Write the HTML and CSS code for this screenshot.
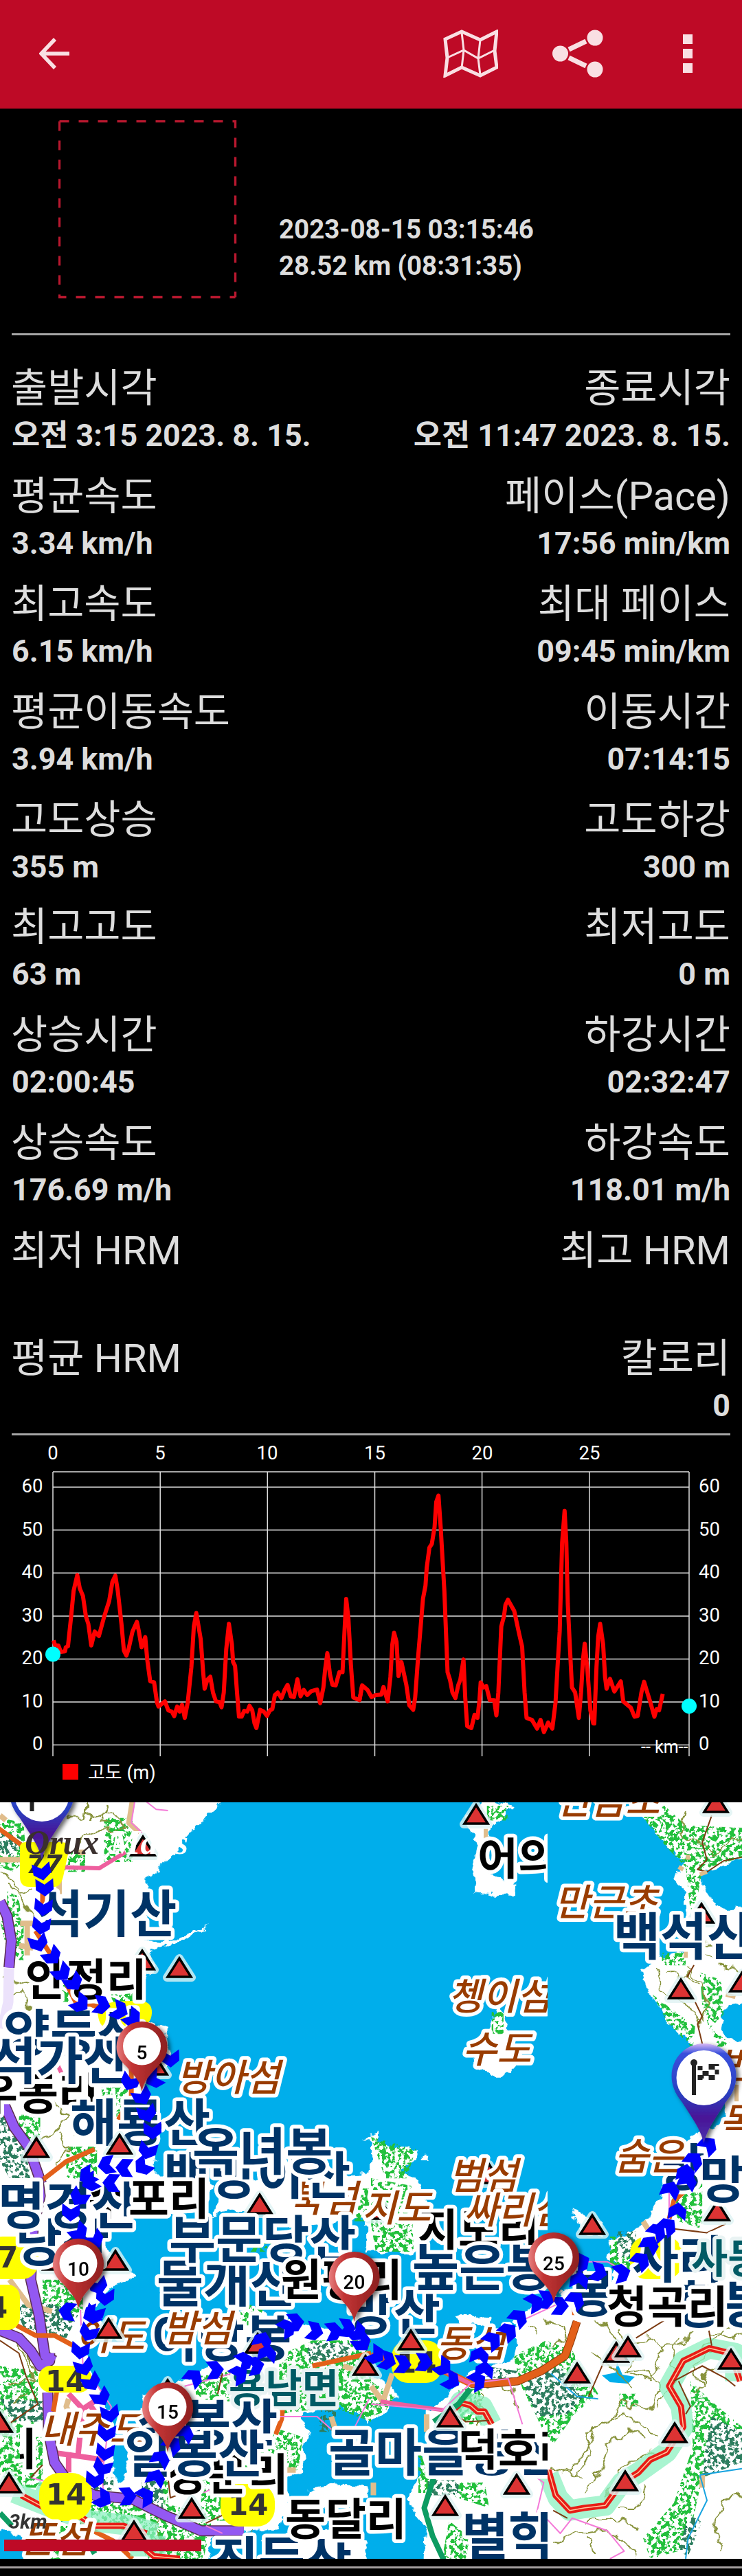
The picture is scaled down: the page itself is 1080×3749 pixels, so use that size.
FILE: index.html
```
<!DOCTYPE html>
<html lang="ko">
<head>
<meta charset="UTF-8" />
<meta name="viewport" content="width=device-width, initial-scale=1" />
<title>Track 2023-08-15</title>

<link rel="stylesheet" href="styles.css">
</head>
<body>

<!-- TOP BAR -->
<header class="topbar">
    <svg class="icon-back" viewBox="0 0 46 46"><path d="M44 23H5M23 2L3 23l20 21" /></svg>
    <div class="actions">
        <svg class="icon-map" viewBox="0 0 80 70">
            <path class="thick" d="M3 14L27 3l27 12L78 3l-3 28 3 24-24 12-27-12L3 67l3-26z" />
            <path class="thin" d="M27 4l3 26-3 26M54 15l-3 27 3 24M6 41l24-11 21 12 24-12" />
        </svg>
        <svg class="icon-share" viewBox="0 0 74 70">
            <circle cx="11.500" cy="35" r="11.500" /><circle cx="62" cy="12" r="11.500" /><circle cx="62" cy="58" r="11.500" />
            <path d="M24 29l25-12M24 41l25 12" />
        </svg>
        <svg class="icon-more" viewBox="0 0 14 56"><path d="M0 0h14v14H0zM0 21h14v14H0zM0 42h14v14H0z" /></svg>
    </div>
</header>

<!-- TRACK SUMMARY -->
<section class="summary">
    <svg class="photo" viewBox="0 0 260 260"><path d="M1.500 1.500h256v256M1.500 1.500v256h256" /></svg>
    <div class="summary-text">
        <p>2023-08-15 03:15:46</p>
        <p>28.52 km (08:31:35)</p>
    </div>
</section>

<!-- STATS -->
<section class="stats">
    <div class="stat"><h2>출발시각</h2><p>오전 3:15 2023. 8. 15.</p></div>
    <div class="stat"><h2>종료시각</h2><p>오전 11:47 2023. 8. 15.</p></div>
    <div class="stat"><h2>평균속도</h2><p>3.34 km/h</p></div>
    <div class="stat"><h2>페이스(Pace)</h2><p>17:56 min/km</p></div>
    <div class="stat"><h2>최고속도</h2><p>6.15 km/h</p></div>
    <div class="stat"><h2>최대 페이스</h2><p>09:45 min/km</p></div>
    <div class="stat"><h2>평균이동속도</h2><p>3.94 km/h</p></div>
    <div class="stat"><h2>이동시간</h2><p>07:14:15</p></div>
    <div class="stat"><h2>고도상승</h2><p>355 m</p></div>
    <div class="stat"><h2>고도하강</h2><p>300 m</p></div>
    <div class="stat"><h2>최고고도</h2><p>63 m</p></div>
    <div class="stat"><h2>최저고도</h2><p>0 m</p></div>
    <div class="stat"><h2>상승시간</h2><p>02:00:45</p></div>
    <div class="stat"><h2>하강시간</h2><p>02:32:47</p></div>
    <div class="stat"><h2>상승속도</h2><p>176.69 m/h</p></div>
    <div class="stat"><h2>하강속도</h2><p>118.01 m/h</p></div>
    <div class="stat"><h2>최저 HRM</h2><p></p></div>
    <div class="stat"><h2>최고 HRM</h2><p></p></div>
    <div class="stat"><h2>평균 HRM</h2><p></p></div>
    <div class="stat"><h2>칼로리</h2><p>0</p></div>
</section>

<!-- ELEVATION CHART -->
<svg class="chart" viewBox="0 2089 1080 534">
    <path class="grid" d="M77 2142H1003M77 2164.300H1003M77 2226.800H1003M77 2289.300H1003M77 2351.900H1003M77 2414.400H1003M77 2476.900H1003M77 2539.400H1003M77 2142V2556M233.200 2142V2556M389.300 2142V2556M545.500 2142V2556M701.600 2142V2556M857.800 2142V2556M1003 2142V2556" />
    <g class="middle">
        <text x="77" y="2124">0</text><text x="233" y="2124">5</text><text x="389" y="2124">10</text>
        <text x="545.500" y="2124">15</text><text x="702" y="2124">20</text><text x="858" y="2124">25</text>
    </g>
    <g class="right">
        <text x="62.500" y="2171.500">60</text><text x="62.500" y="2234.500">50</text><text x="62.500" y="2296.500">40</text>
        <text x="62.500" y="2359.500">30</text><text x="62.500" y="2421.500">20</text><text x="62.500" y="2484.500">10</text><text x="62.500" y="2546.500">0</text>
    </g>
    <g>
        <text x="1017" y="2171.500">60</text><text x="1017" y="2234.500">50</text><text x="1017" y="2296.500">40</text>
        <text x="1017" y="2359.500">30</text><text x="1017" y="2421.500">20</text><text x="1017" y="2484.500">10</text><text x="1017" y="2546.500">0</text>
    </g>
    <text class="unit" x="933" y="2550.500">-- km--</text>
    <g class="profile">
        <path transform="translate(0 2060) scale(.35714 .36991)" d="M218 885L225 905 238 905 248 930 265 928 268 912 277 908 290 790 300 690 315 628 325 680 338 710 350 790 360 820 372 905 386 850 403 868 425 790 445 730 458 655 470 630 480 690 495 820 505 925 515 945 525 915 540 850 558 812 566 850 577 912 592 872 600 960 612 1045 628 1050 640 1130 646 1145 672 1125 686 1160 700 1165 710 1183 722 1145 732 1165 742 1138 753 1190 765 1130 780 990 790 830 800 777 818 880 828 1010 834 1075 845 1040 857 1028 868 1090 880 1125 895 1128 903 1148 912 1090 922 920 933 820 945 900 950 970 958 985 966 1090 974 1185 985 1185 995 1162 1008 1165 1017 1142 1028 1160 1037 1210 1045 1230 1060 1158 1075 1165 1088 1182 1100 1160 1110 1155 1120 1100 1132 1090 1147 1112 1160 1080 1172 1060 1185 1105 1198 1108 1212 1038 1225 1105 1238 1080 1252 1100 1268 1085 1292 1078 1305 1132 1318 1070 1325 1000 1334 935 1345 1020 1355 1060 1368 1062 1383 1010 1396 1010 1404 850 1411 722 1420 800 1430 980 1440 1110 1465 1120 1476 1062" />
        <path transform="translate(520 2060) scale(.35714 .36991)" d="M9 1120L20 1062 42 1080 58 1108 75 1100 98 1098 107 1068 124 1125 135 1030 143 900 150 855 160 890 168 1025 180 970 200 1060 212 1140 228 1158 236 1110 248 950 268 720 278 670 283 600 294 520 304 505 315 440 322 340 331 315 340 440 355 690 368 1010 378 1040 388 1090 400 1112 412 1060 420 1040 433 960 440 1110 448 1222 465 1230 478 1178 490 1190 498 1120 503 1050 515 1070 526 1065 540 1120 558 1120 567 1180 575 1090 587 830 598 790 604 745 614 725 640 770 660 860 672 910 682 1090 690 1190 712 1198 733 1232 747 1198 761 1246 778 1208 795 1232 808 1130 818 960 825 850 835 500 845 375 852 500 858 740 866 900 875 1070 888 1090 903 1190 912 1090 920 960 927 898 938 1000 950 1160 962 1212 966 1212 975 990 982 870 990 820 1002 900 1010 1030 1016 1075 1030 1036 1048 1086 1074 1046 1084 1125 1115 1150 1130 1185 1143 1182 1158 1090 1169 1048 1182 1090 1195 1130 1211 1185 1220 1155 1230 1160 1245 1095" />
    </g>
    <circle class="cursor" cx="77" cy="2407.500" r="11" />
    <circle class="cursor" cx="1003" cy="2483" r="11" />
    <rect class="key" x="91" y="2567" width="23" height="23" />
    <text class="legend" x="128" y="2589">고도 (m)</text>
</svg>

<!-- MAP -->
<svg class="map" viewBox="0 0 1080 1101">
    <defs>
        <filter id="scrub" filterUnits="userSpaceOnUse" x="0" y="0" width="1080" height="1101" color-interpolation-filters="sRGB">
            <feTurbulence type="fractalNoise" baseFrequency=".16" numOctaves="3" seed="4" />
            <feColorMatrix values="0 0 0 0 0  0 0 0 0 0  0 0 0 0 0  16 0 0 0 -7.700" result="n" />
            <feComposite in="SourceGraphic" in2="n" operator="in" />
        </filter>
        <filter id="rough" filterUnits="userSpaceOnUse" x="-20" y="-20" width="1120" height="1141">
            <feTurbulence type="fractalNoise" baseFrequency=".06" numOctaves="3" seed="9" />
            <feDisplacementMap in="SourceGraphic" scale="16" xChannelSelector="R" yChannelSelector="G" />
        </filter>
        <filter id="wiggle" filterUnits="userSpaceOnUse" x="-20" y="-20" width="1120" height="1141">
            <feTurbulence type="fractalNoise" baseFrequency=".05" numOctaves="2" seed="2" />
            <feDisplacementMap in="SourceGraphic" scale="24" xChannelSelector="R" yChannelSelector="G" />
        </filter>
        <filter id="shade" x="-30%" y="-20%" width="180%" height="150%"><feDropShadow dx="4" dy="3" stdDeviation="3" flood-opacity=".6" /></filter>
        <linearGradient id="redPin" x1="0" x2="1"><stop offset="0" stop-color="#e87f7f" /><stop offset=".3" stop-color="#c23434" /><stop offset="1" stop-color="#8c1f1f" /></linearGradient>
        <linearGradient id="bluePin" x1="0" y1="0" x2="0" y2="1"><stop offset="0" stop-color="#d9b8f5" /><stop offset=".1" stop-color="#3a50dc" /><stop offset=".5" stop-color="#2840c0" /><stop offset=".75" stop-color="#4a1496" /><stop offset="1" stop-color="#4a34b0" /></linearGradient>
        <clipPath id="seam"><path d="M0 0H797V1101H0z" /></clipPath>
        <clipPath id="seamLeft"><path d="M29 0H1080V1101H29z" /></clipPath>
        <marker id="arrow" markerUnits="userSpaceOnUse" markerWidth="28" markerHeight="28" viewBox="-13 -13 26 26" orient="auto">
            <path d="M-12-12L3-12 12 0 3 12-12 12-4 0z" fill="#00f" />
        </marker>
        <g id="peak"><path class="peak-halo" d="M0 4L18 32H-18z" /><path class="peak" d="M0 4L17 31H-17z" /></g>
        <g id="kmpin" filter="url(#shade)">
            <path fill="url(#redPin)" d="M0 0C-3-16-10-22-22-36C-33-46-37-54-37-65A37 37 0 0 1 37-65C37-54 33-46 22-36C10-22 3-16 0 0z" />
            <circle cy="-66" r="27.500" fill="#fff" />
        </g>
        <g id="flagpin" filter="url(#shade)">
            <path fill="url(#bluePin)" d="M0 0C-5-20-14-32-32-60C-42-72-47-84-47-98A47 47 0 0 1 47-98C47-84 42-72 32-60C14-32 5-20 0 0z" />
            <circle cy="-95" r="40" fill="#fff" />
            <circle cx="-14.500" cy="-117" r="5" fill="#222" /><path fill="#222" d="M-17.500-116h6v46h-6zM-9-112h7v6h-7zM-2-105h9v7h-9zM7-115h9v8h-9zM16-107h6v7h-6zM-9-99h7v7h-7zM7-99h9v7h-9zM-2-98h2v4h-2zM16-115h6v3h-6z" />
        </g>
    </defs>

    <rect class="sea" width="1080" height="1101" />

    <!-- land, tile by tile -->
    <g class="land" filter="url(#rough)">
        <path transform="translate(0 -13) scale(.34439 .35714)" d="M-40-60H960L922 36L850 120 750 220 752 235 690 285 670 320 620 345 615 600 700 605 800 570 890 535 800 590 700 622 630 640 650 700 600 780 540 850 600 930 700 960 725 1090 690 1120 620 1170 610 1250 630 1400 660 1500 650 1590H-40zM1530 1400L1600 1380V1420zM1530 1568L1600 1500V1590z" />
        <path transform="translate(540 -13) scale(.34439 .35714)" d="M390 120L430 60 500 20 595 50 560 100 520 130 490 200 500 320 540 350 615 370 610 415 440 405 430 330 450 240 430 180zM525 880L560 890 583 950 575 1000 620 1100 590 1150 520 1150 440 1110 430 1040 500 960zM1130-20L1150 100 1200 160 1290 250 1330 280 1270 340 1330 400 1330 640 1230 660 1145 720 1165 800 1220 880 1280 960 1360 1020 1480 1060 1500 1330 1340 1400 1320 1590H1620V1000L1510 1000 1480 960 1500 860 1620 840V470H1460L1440 430 1400 370 1400 330 1480 290 1620 250V-20zM0 1400L60 1440 200 1450 190 1500 130 1530 140 1590H0zM220 1475h20v20h-20z" />
        <path transform="translate(0 547) scale(.34439 .36926)" d="M-40-20H860L900 30 860 100 760 140 560 140 440 200 440 260 520 340 570 400 480 420 400 500 360 640 380 740 430 850 470 960 470 1080 490 1200 540 1170 530 1110 600 960 600 860 780 800 880 740 1000 640 980 540 1050 500 1120 520 1120 600 1240 560 1560 640V950L1400 880 1280 940 1310 1000 1280 1060 1290 1150 1200 1180 1230 1300 1160 1380 900 1400 860 1560H100V1420L-40 1370zM1000 0L1600-20V170L1500 160 1230 200 1100 140 960 120 880 160zM1300 1230l100-20 160 10v30l-250 60zM1100 1430l200-60 250 60v110h-400z" />
        <path transform="translate(540 547) scale(.34439 .36926)" d="M-20-20H170L230 80 240 180 180 300-20 290zM600 570L700 500 870 430 1000 430 1050 340 1000 320 1010 250 1150 180 1230 80 1250-20H1620V1540H220L230 1380 150 1270 200 1180 240 1000 240 920 330 860 340 830 420 760 600 720 620 640zM-20 780L60 800 120 860 60 920-20 960zM350 540l60-10 40 20 60-10-10 40-60-10-50 20zM840 120l50 20 80 30 10 60-90-20z" />
    </g>
    <path class="sea" d="M876 834l20-4 2-15 8 18 18 3-10 10-26-2z" />

    <!-- woods and fields -->
    <g filter="url(#scrub)">
        <g transform="translate(0 -13) scale(.34439 .35714)">
            <path class="wood" d="M0 100L100 120 110 260 60 320 0 300zM30 400L80 420 90 520 30 500zM440 100h120v180H440zM0 520h100v160H40zM240 700h130v150H240zM470 780h100v120H470zM430 1200h110v130H430zM80 1310h90v120H80zM280 1440h130v130H280zM260 240h100v80H260z" />
            <path class="field" d="M0 150L90 180 60 260 0 240zM0 1280L90 1370 130 1568H40L0 1500z" />
        </g>
        <g transform="translate(540 -13) scale(.34439 .35714)">
            <path class="wood" d="M1150 100L1240 50 1330 130 1568 140V260L1400 310 1380 420 1350 480 1330 300 1250 220zM1390 730L1480 760 1490 900 1430 960 1400 860zM1190 820L1300 900 1370 950 1360 1040 1250 930zM490 50h90v60h-90zM510 890h50v90h-50zM0 1400L190 1450 150 1568H60zM1230 650h100v50h-100zM1330 1040h90v60h-90zM1440 960l80 60-60 20z" />
        </g>
        <g transform="translate(0 547) scale(.34439 .36926)">
            <path class="wood" d="M0 740L160 760 160 940 80 1060 0 1010zM180 400h170v130H180zM1000 500h110v80h-110zM1180 700L1320 640 1568 640V960L1400 900 1180 930zM820 780L980 760 970 880 830 870zM980 1080l200-90 100 30-20 130-280 40zM380 1290L600 1260 900 1330 860 1500H620L580 1400 390 1360zM0 1020h180v200H0zM850 1150h130v200H850zM150 1370h160v130H150zM1240 830l120 0 0 80-120 10zM1480 40h80v130h-80zM1060 230h100v60h-100zM60 130h90v70H60zM620 1190h90v90h-90z" />
            <path class="field" d="M60 500L210 490 330 540 280 630 100 590zM0 870L200 880 190 960 60 960zM1300 650h180v70h-180zM360 1180h120v50H360zM600 1170h90v130h-90zM1350 910h70v90h-70z" />
        </g>
        <g transform="translate(540 547) scale(.34439 .36926)">
            <path class="wood" d="M0 0L170 30 180 290 20 290 0 180zM600 700L740 640 850 680 960 850 860 930 770 1050 720 980 640 830zM1350 800L1440 880 1568 980V1090L1480 1150 1400 1180 1360 1350 1300 1470 1180 1500 1150 1420 1280 1280 1360 1060zM200 1050L250 1200 480 1200 500 1300 300 1240 200 1240zM330 1350L420 1420 400 1500H300zM1240 0H1400V200L1300 170zM1010 230h110v130h-110zM1050 850h80v50h-80zM370 830h100v140H370zM0 800l100 60-40 60-60 20z" />
            <path class="field" d="M480 740L620 760 600 800 480 780zM640 800L800 740 850 820 900 860 830 930 700 940zM1440 940L1568 1000V1120L1400 1180 1410 1080zM1040 210h80v100h-80zM1340 1330l60 20-60 140-40-20zM240 1190h130v60H240z" />
        </g>
    </g>

    <!-- contour lines -->
    <g class="contour" filter="url(#wiggle)">
        <path d="M95 20L140 22 165 12 180 38 135 45 110 60M130 0v25M150 0l5 25 10 3M0 100l20 10 5 25 20-10M10 118l25 30 10 20M5 255l40 10M55 280l30 5M10 290l20-20 10 30-30 30M70 430l30 25-25 30-15 5M85 480l15 25-20 25M130 440l5 30-25 15M470 1040l-20 0" />
        <path d="M1000 10l-10 35 25 10 20 25 30-25 15-5M1025 200l20 20 35 15M1025 220l25 20 30 5M975 250l25-3 15 20M960 245l3 25 15 10M1000 240l20 25 10 40-8 12M985 290l30 10 5 25" />
        <path d="M20 780l20 25 5 35-30 10M40 790l10 40M190 1010l35 15 10 45M1070 760l-20 10-30 30M20 870l20-10M350 1090l20-30" />
        <path d="M860 750l30 15 10 25 50-10 15 25-20 35-30-10 10-30-25-5-15 20M860 800l30 20 30 30M910 830l30-5 20 30-15 30-40-10-20 25-35 20 10 30-20 30-25-5M800 970l30 5 20-25 15-40 40-20 20 10 30 20M845 1000l30-25 10-40 30-20 25 10M880 1010l30-45 30-20 25 5M900 1030l25 0 15-35M805 1080l30-15 50-5 30 20 10 20M1010 760l-15 30-35 10M990 780l-15 40 10 20-30 40M1035 770l30 10 15-10M1040 795l-30 25 10 30M1010 860l15-25 35-15 20 10M1080 1010l-30 10-10 40 10 30M900 750l10 40 20 10M790 755l30 10 5 20-20 5M770 760l10 15M710 850l35 5 10 30M700 860v60M850 1045l50 0 30 10M850 1070l20 20" />
    </g>

    <!-- roads -->
    <g class="roads">
        <g transform="translate(0 -13) scale(.34439 .35714)">
            <path class="sand wide" d="M560 30L545 120 590 160M0 270H90M330 240h30M250 330v80M85 530h70M115 540v120M80 620l60 10M0 90l25 20" />
            <path class="pink-line" d="M570 30L555 120 600 160M600 20l60 45 50 5" />
            <path class="purple case" d="M0 440L30 500 48 600 38 710" /><path class="purple" d="M0 440L30 500 48 600 38 710" />
            <path class="lilac" d="M38 712L35 850 10 960" />
            <path class="purple case" d="M10 1250L60 1360 120 1440 175 1590" /><path class="purple" d="M10 1250L60 1360 120 1440 175 1590" />
            <path class="orange" d="M-10 140L90 210M180 1575L280 1500 400 1450M180 400V470M150 560L230 680 320 850 420 870 560 920M555 1120V1240L500 1330" />
            <path class="magenta" d="M240 300L420 305 530 240M240 1100l20 40" />
        </g>
        <g transform="translate(540 -13) scale(.34439 .35714)">
            <path class="trail" d="M1440 90L1400 200 1420 270 1380 310 1420 320 1490 275 1568 260M1365 700L1335 750M1370 850L1400 910 1380 940 1400 1020" />
            <path class="sand" d="M485 145v50M1545 1180v130M1340 250v20M1300 300l20 10M1390 330l30-10M1330 640v30M1500 820l40 10" />
        </g>
        <g transform="translate(0 547) scale(.34439 .36926)">
            <path class="sand wide" d="M40 400L120 500 220 525M290 870L280 900 310 960M1150 1150h100M1420 1000l-20-60M1450 740l60 20" />
            <path class="magenta wide" d="M290 850L350 910 430 860M350 910l-20 180M210 1080l230 30M290 1080v80M385 900l30 40" />
            <path class="purple case" d="M160 0L170 70 140 200 130 400 165 540 190 700 230 720M0 600L80 630 130 680 170 740 210 720 210 690" />
            <path class="purple" d="M160 0L170 70 140 200 130 400 165 540 190 700 230 720M0 600L80 630 130 680 170 740 210 720 210 690" />
            <path class="purple case" d="M202 845L205 1000 230 1120 290 1200 400 1250 560 1265 700 1330 850 1390 1030 1390" />
            <path class="purple" d="M202 845L205 1000 230 1120 290 1200 400 1250 560 1265 700 1330 850 1390 1030 1390" />
            <path class="orange" d="M70 580L150 620 230 620 320 665M1320 740L1420 720 1568 690M1195 900L1190 950 1165 1010M240 840L225 920M330 1360L480 1430 560 1500" />
            <path class="pink-line" d="M340 520L350 730 470 900 430 1180 440 1250M130 1180L210 1200 230 1300 320 1370 330 1410M780 820L980 770M1180 940L1340 940 1400 990M860 1240L950 1200M870 1370L940 1400M1500 980l60-110" />
            <path class="trail" d="M0 640L80 690 110 780 160 890 20 980M130 1180L180 1130M940 770L920 850M710 1180L720 1260 800 1230M960 1230L960 1320 870 1360" />
            <path class="mint" d="M60 1240L250 1310 380 1350 560 1370 660 1400M150 1230L350 1310M550 1450h150" />
            <path class="red" d="M90 1250L200 1305 300 1310 400 1370 520 1370 620 1400M600 1450L650 1490 760 1500" /><path class="red-core" d="M90 1250L200 1305 300 1310 400 1370 520 1370 620 1400M600 1450L650 1490 760 1500" />
            <path class="green" d="M0 1320L50 1370M230 1350L310 1330 400 1480" />
        </g>
        <g transform="translate(540 547) scale(.34439 .36926)">
            <path class="sand wide" d="M0 820L50 880 90 770M235 930v70M1170 200l-20-30M1400 1170v50M10 1200v50" />
            <path class="mint" d="M750 1170L790 1260 840 1310 900 1300 990 1290 1060 1200 1130 1160 1250 1080 1320 980 1310 900 1260 820 1320 720 1430 670 1540 690V800M350 930L380 880 470 900 510 970" />
            <path class="red" d="M750 1150L780 1250 840 1310 900 1300 990 1290 1060 1200 1130 1160 1180 1110 1250 1080 1320 980 1310 900 1260 820 1320 720 1430 670 1520 690 1560 800M330 930L380 885 420 895 450 920 480 920 510 970" />
            <path class="red-core" d="M750 1150L780 1250 840 1310 900 1300 990 1290 1060 1200 1130 1160 1180 1110 1250 1080 1320 980 1310 900 1260 820 1320 720 1430 670 1520 690 1560 800M330 930L380 885 420 895 450 920 480 920 510 970" />
            <path class="orange wide case" d="M870 565L840 650 820 700 720 760 620 800 500 810 420 810" /><path class="orange wide" d="M870 565L840 650 820 700 720 760 620 800 500 810 420 810 310 760 0 700" />
            <path class="orange" d="M1350 30L1280 90 1260 160M850 530h80" />
            <path class="magenta" d="M40 880L310 915M310 760L420 810M850 520l120 0" />
            <path class="green" d="M265 1180L225 1300 260 1410 310 1510M420 830L370 890 265 960" />
            <path class="pink-line" d="M0 890L300 915 420 810 580 790 600 850 640 970M740 1340L800 1400 850 1340 1000 1390 1070 1470 1010 1500M700 1180L730 1200 700 1320M640 560L780 500M890 330L1000 330 1080 370M1260 30V160M1400 0v20" />
            <path class="trail" d="M1000 690L920 860M1120 630L1240 560M1420 560L1440 660M1300 800L1350 900 1330 930M1280 800L1400 740 1500 790 1540 820M1280 200L1420 215 1500 180M340 920l60 40 100-5M770 1310l60 30" />
            <path class="river" d="M1390 1170L1420 1270 1340 1420 1330 1500M1390 1170L1568 1145M760 770L870 860 960 870" />
        </g>
    </g>

    <!-- road shields -->
    <g class="shield">
        <path d="M29 66q0-8 8-8h50q15 0 14 8L92 108q-4 16-14 15H42q-13 0-13-15z" />
        <path d="M142 302q5-14 60-13 20 0 19 18t-20 20H150q-8-8-8-25z" />
        <rect x="-20" y="632" width="76" height="62" rx="24" /><rect x="-20" y="702" width="49" height="66" rx="18" />
        <rect x="56" y="820" width="77" height="39" rx="18" /><rect x="57" y="976" width="77" height="70" rx="30" />
        <rect x="321" y="992" width="79" height="62" rx="26" /><rect x="570" y="783" width="74" height="62" rx="24" /><rect x="917" y="632" width="76" height="62" rx="24" />
    </g>
    <g class="shield-text">
        <text class="slant" x="38" y="103">77</text><text x="-3" y="677">7</text><text x="-18" y="750">4</text>
        <text x="66" y="857">14</text><text x="67" y="1022">14</text><text x="332" y="1037">14</text><text x="577" y="830">14</text>
    </g>

    <!-- peaks -->
    <g>
        <use href="#peak" x="207" y="212" /><use href="#peak" x="261" y="223" /><use href="#peak" x="53" y="485" /><use href="#peak" x="208" y="46" />
        <use href="#peak" x="226" y="365" /><use href="#peak" x="693" y="0" /><use href="#peak" x="1042" y="-17" /><use href="#peak" x="1021" y="144" />
        <use href="#peak" x="991" y="254" /><use href="#peak" x="1080" y="244" /><use href="#peak" x="712" y="523" /><use href="#peak" x="378" y="567" />
        <use href="#peak" x="168" y="649" /><use href="#peak" x="80" y="649" /><use href="#peak" x="244" y="837" /><use href="#peak" x="0" y="885" />
        <use href="#peak" x="554" y="575" /><use href="#peak" x="862" y="597" /><use href="#peak" x="1044" y="577" /><use href="#peak" x="897" y="783" />
    </g>

    <!-- place names -->
    <g class="village">
        <text x="37" y="281">안정리</text><text x="-33" y="447">우동리</text><text x="128" y="600">수포리</text><text x="608" y="645">지도리</text>
        <text x="243" y="1001">장문리</text><text x="-5" y="964" clip-path="url(#seamLeft)">리</text>
    </g>
    <g class="islet">
        <text x="420" y="596">북섬</text><text x="110" y="797">어도</text><text x="59" y="932">내주도</text><text x="30" y="1092">뜬섬</text>
        <text x="810" y="17">만금초</text><text x="807" y="165">만근초</text><text x="653" y="563">범섬</text><text x="1045" y="402">번</text><text x="1047" y="484">목</text>
    </g>
    <g class="town"><text x="333" y="874">용남면</text></g>
    <g class="hill">
        <text x="53" y="189">석기산</text><text x="5" y="363">양등산</text><text x="-15" y="403">석가산</text><text x="102" y="493">해룡산</text>
        <text x="238" y="570">백방이산</text><text x="280" y="535">옥녀봉</text><text x="23" y="668">당산</text><text x="-3" y="614">명경산</text>
        <text x="228" y="727">물개산</text><text x="246" y="663">부문당산</text><text x="220" y="807">이망봉</text><text x="505" y="768">망산</text>
        <text x="828" y="742">봉</text><text x="600" y="704">높은봉</text><text x="983" y="758">항봉</text><text x="920" y="692">사라</text>
        <text x="958" y="558">망</text><text x="1018" y="576">망산</text><text x="893" y="222">백석산</text><text x="200" y="930">삼봉산</text><text x="181" y="975">일봉산</text>
        <text x="308" y="1130">진등산</text>
    </g>
    <g clip-path="url(#seam)">
        <g class="hill"><text x="478" y="973">골마을봉산</text><text x="672" y="1095">별학산</text></g>
        <g class="islet"><text x="652" y="302">쳉이섬</text><text x="675" y="613">싸리섬</text></g>
        <g class="village"><text x="695" y="105">어의도</text><text x="666" y="965">덕호리</text></g>
    </g>
    <g class="village">
        <text x="187" y="600">포리</text><text x="409" y="718">원평리</text><text x="883" y="757">청곡리</text><text x="415" y="1066">동달리</text>
    </g>
    <g class="islet">
        <text x="257" y="420">방아섬</text><text x="673" y="379">수도</text><text x="894" y="535">숨은</text><text x="527" y="610">지도</text>
        <text x="237" y="785">밤섬</text><text x="635" y="807">동섬</text>
    </g>
    <g class="town"><text x="1006" y="685">사등면</text></g>

    <g>
        <use href="#peak" x="174" y="480" /><use href="#peak" x="158" y="748" /><use href="#peak" x="375" y="770" /><use href="#peak" x="13" y="973" />
        <use href="#peak" x="195" y="1043" /><use href="#peak" x="279" y="1010" /><use href="#peak" x="532" y="802" /><use href="#peak" x="598" y="765" />
        <use href="#peak" x="914" y="775" /><use href="#peak" x="840" y="813" /><use href="#peak" x="1064" y="793" /><use href="#peak" x="655" y="877" />
        <use href="#peak" x="752" y="975" /><use href="#peak" x="648" y="1006" /><use href="#peak" x="982" y="900" /><use href="#peak" x="910" y="970" />
    </g>

    <!-- route -->
    <polyline class="route" points="61,101 65,124 63,153 60,180 56,205 76,224 90,248 107,262 117,293 148,295 174,303 193,314 248,373 224,403 189,407 207,428 214,453 222,478 215,507 208,530 181,532 155,528 127,544" />
    <polyline class="route" points="162,554 131,553 115,575 103,597 115,626 138,637 143,704 153,720 133,746 98,741" />
    <polyline class="route" points="138,744 129,772 117,798 122,822 133,844 147,866 160,890 155,918 153,946 149,968 138,986 150,1014 186,1010 212,1010 227,983 234,955 251,935 269,918 282,837 313,826 348,833 356,813 372,820 389,802 382,783 418,765 430,757 458,770 486,770 505,765 520,772 527,787 547,805 564,813 586,818 617,815 645,822 657,842 695,842 705,826 698,805 717,783 740,770 755,750 778,728 795,724 815,733 838,724 843,695 846,669 871,684 905,685 933,667 946,643 957,625 972,617 986,595 976,564 1001,551 998,539 1010,521 1031,499" />

    <!-- km pins -->
    <use href="#kmpin" x="206.500" y="421" /><use href="#kmpin" x="114" y="737" /><use href="#kmpin" x="244" y="946" />
    <use href="#kmpin" x="515.500" y="756" /><use href="#kmpin" x="806" y="728" />
    <g class="pin-text">
        <text x="206.500" y="374">5</text><text x="114" y="689">10</text><text x="244" y="897">15</text><text x="515.500" y="708">20</text><text x="806" y="681">25</text>
    </g>
    <use href="#flagpin" x="61" y="83" /><use href="#flagpin" x="1024.500" y="496" />

    <text class="logo" x="36" y="75">Orux</text><text class="logo light" x="160" y="75">Maps</text>
    <text class="scale-text" x="13" y="1057">3km</text>
    <rect class="scale-bar" x="6" y="1073" width="287" height="17" />
</svg>

<div class="bottom-line"></div>

</body>
</html>
```
FILE: styles.css
```
* { margin: 0; padding: 0; box-sizing: border-box; }
body {
    background: #000;
    color: #ddd;
    font-family: Roboto, 'Noto Sans CJK KR', sans-serif;
    width: 1080px;
    overflow-x: hidden;
}
svg { display: block; }

.topbar {
    height: 158px;
    background: #be0a26;
    display: flex;
    justify-content: space-between;
    align-items: center;
    padding: 0 72px 2px 57px;
}
.topbar svg { fill: none; stroke: #f9dfe3; }
.actions { display: flex; align-items: center; }
.icon-back { width: 46px; height: 46px; stroke-width: 5.5; }
.icon-map { width: 80px; height: 70px; margin-right: 79px; }
.icon-map .thick { stroke-width: 5; }
.icon-map .thin { stroke-width: 3; }
.topbar .icon-share { width: 74px; height: 70px; margin-right: 116px; stroke-width: 7; }
.topbar .icon-share circle { fill: #f9dfe3; stroke: none; }
.topbar .icon-more { width: 14px; height: 56px; fill: #f9dfe3; stroke: none; }

.summary {
    margin: 0 17px;
    height: 330px;
    border-bottom: 3px solid #a5a5a5;
    display: flex;
    padding: 17px 0 0 68px;
}
.photo { width: 260px; height: 260px; fill: none; stroke: #b8182f; stroke-width: 3.4; stroke-dasharray: 14 14; }
.summary-text {
    padding: 132px 0 0 61px;
    font-size: 38.5px;
    font-weight: 700;
    line-height: 53px;
}

.stats {
    margin: 0 17px;
    height: 1601px;
    padding-top: 34px;
    border-bottom: 3px solid #a5a5a5;
    display: grid;
    grid-template-columns: 1fr 1fr;
    grid-auto-rows: 156.9px;
    align-content: start;
}
.stat h2 {
    font-size: 57.8px;
    font-weight: 400;
    line-height: 84px;
    height: 84px;
    padding-top: 1px;
    margin-left: -1px;
}
.stat p { font-size: 44.8px; font-weight: 700; line-height: 56px; height: 56px; }
.stat:nth-child(even) { text-align: right; }

.chart { width: 1080px; height: 534px; }
.chart text { fill: #fff; font-size: 27.5px; }
.chart .middle text { text-anchor: middle; }
.chart .right text { text-anchor: end; }
.chart .unit { font-size: 25px; }
.chart .legend { font-size: 27px; }
.grid { stroke: #ddd; stroke-width: 1.5; fill: none; }
.profile path {
    fill: none;
    stroke: red;
    stroke-width: 6;
    stroke-linejoin: round;
    vector-effect: non-scaling-stroke;
}
.cursor { fill: #0ff; }
.key { fill: red; }

/* map */
.map { width: 1080px; height: 1101px; overflow: hidden; }
.sea { fill: #00aeeb; }
.land { fill: #fff; }
.wood { fill: #22c03c; }
.field { fill: #2c7d5e; }
.contour path { fill: none; stroke: #87923a; stroke-width: 2; }
.roads path { fill: none; vector-effect: non-scaling-stroke; stroke-linejoin: round; stroke-width: 6; }
.roads .sand { stroke: #e0bd8c; }
.roads .wide { stroke-width: 8; }
.roads .pink-line { stroke: #f47ad8; stroke-width: 2; }
.roads .magenta { stroke: #ee5f9e; }
.roads .purple { stroke: #9358f2; stroke-width: 13; }
.roads .lilac { stroke: #ece2fb; stroke-width: 15; }
.roads .orange { stroke: #e3601a; stroke-width: 7; }
.roads .orange.wide { stroke-width: 10; }
.roads .case { stroke: #5b2c50; stroke-width: 16; }
.roads .orange.case { stroke: #8c3a0a; stroke-width: 12; }
.roads .mint { stroke: #8cf0c0; stroke-width: 30; opacity: .75; }
.roads .red { stroke: #e81c16; stroke-width: 9; }
.roads .red-core { stroke: #ffc9a0; stroke-width: 1.5; }
.roads .green { stroke: #0d9c62; stroke-width: 8; }
.roads .trail { stroke: #7c3b12; stroke-width: 2; }
.roads .river { stroke: #18a4e0; stroke-width: 2; }

.shield { fill: #ff0; }
.shield-text text { font: bold 42px 'DejaVu Sans', sans-serif; fill: #333; }
.shield-text .slant { font-style: italic; font-size: 38px; }

.peak-halo { fill: #dff3f3; stroke: #dff3f3; stroke-width: 12; stroke-linejoin: round; opacity: .8; }
.peak { fill: #dc3333; stroke: #000; stroke-width: 3.5; }

.village text, .hill text, .islet text, .town text {
    font-family: 'Noto Sans CJK KR', sans-serif;
    paint-order: stroke;
    stroke: #fff;
    stroke-width: 11px;
    stroke-linejoin: round;
}
.village text { font-size: 64px; font-weight: 700; fill: #000; }
.hill text { font-size: 74px; font-weight: 700; fill: #003366; }
.islet text { font-size: 54.5px; font-weight: 500; font-style: italic; fill: #993c00; }
.town text { font-size: 58px; font-weight: 700; fill: #005a64; stroke: #e9f3f3; }

.route { fill: none; stroke: none; marker-start: url(#arrow); marker-mid: url(#arrow); marker-end: url(#arrow); }
.pin-text text { font-size: 28px; font-weight: 500; fill: #000; text-anchor: middle; }
.logo { font: italic bold 50px 'Liberation Serif', serif; fill: #3a302e; }
.logo.light { fill: #fff; }
.scale-text { font-size: 29px; font-weight: 700; font-style: italic; fill: #333; }
.scale-bar { fill: #be0a26; }

.bottom-line { margin-top: 11px; height: 3px; background: #a5a0a0; }
```
